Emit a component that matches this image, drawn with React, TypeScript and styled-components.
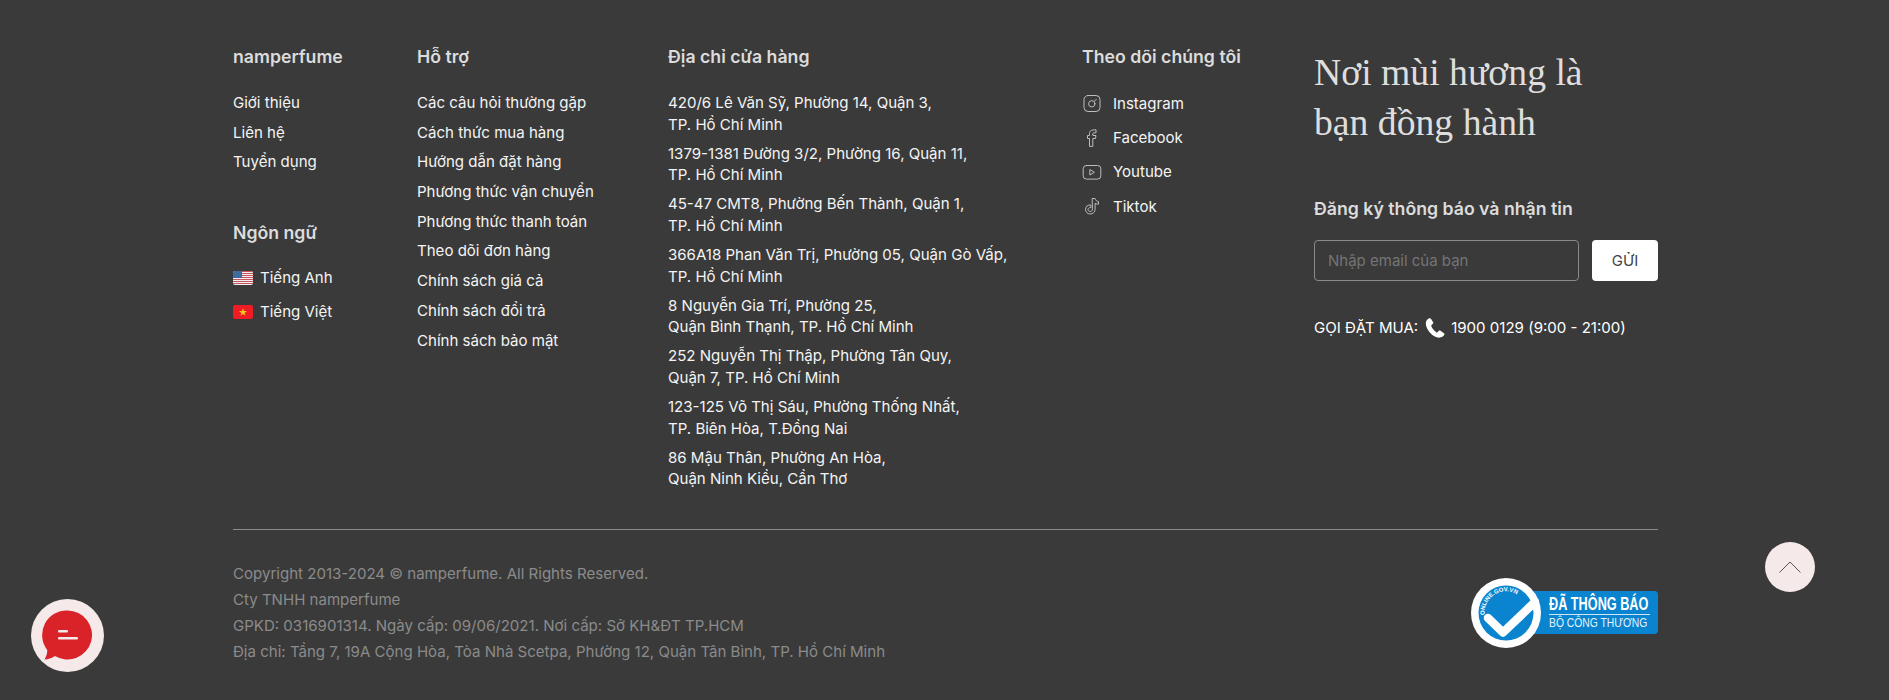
import React from "react";
import styled, { createGlobalStyle } from "styled-components";

const Global = createGlobalStyle`
  html, body { margin: 0; padding: 0; background: #3a3a3a; }
  * { box-sizing: border-box; }
  body { font-family: Inter, "Noto Sans", sans-serif; }
`;

const Footer = styled.footer`
  min-height: 700px;
  background: #3a3a3a;
  padding: 45px 231px 0 233px;
  color: #f4f4f4;
  font-size: 15.05px;
`;
const Columns = styled.div`
  display: grid;
  grid-template-columns: 184px 251px 414px 232px 344px;
  padding-bottom: 31px;
  border-bottom: 1px solid #8c8c8c;
`;
const Column = styled.div`
  display: flex;
  flex-direction: column;
`;
const Heading = styled.h3<{ $top?: number }>`
  margin: ${(p) => p.$top ?? 0}px 0 19px;
  font-size: 17.7px;
  line-height: 24px;
  font-weight: 600;
  color: #dcdcdc;
  white-space: nowrap;
`;
const LinkList = styled.ul`
  list-style: none;
  margin: 0;
  padding: 0;
`;
const LinkItem = styled.li`
  height: 29.7px;
  line-height: 29.7px;
  white-space: nowrap;
`;
const Address = styled.p`
  margin: 0 0 7.7px;
  line-height: 21.5px;
  white-space: nowrap;
  &:first-of-type { margin-top: 4px; }
`;
const Languages = styled.div`
  margin-top: -3px;
`;
const IconRow = styled.div<{ $h: number; $gap: number }>`
  display: flex;
  align-items: center;
  gap: ${(p) => p.$gap}px;
  height: ${(p) => p.$h}px;
  white-space: nowrap;
`;
const SocialIcons = styled.div`
  margin-top: -2px;
`;
const SocialIcon = styled.svg`
  width: 20px;
  height: 20px;
  flex: none;
  fill: none;
  stroke: #bdbdbd;
  stroke-width: 1;
  stroke-linecap: round;
  stroke-linejoin: round;
`;
const Flag = styled.svg`
  width: 20px;
  height: 14px;
  flex: none;
  border-radius: 2px;
`;
const Slogan = styled.div`
  font-family: "Liberation Serif", serif;
  font-size: 37.7px;
  line-height: 50px;
  color: #dedede;
  margin: 2px 0 50px;
`;
const Subscribe = styled.h3`
  margin: 0 0 19px;
  font-size: 17.7px;
  line-height: 24px;
  font-weight: 600;
  color: #dcdcdc;
  white-space: nowrap;
`;
const Form = styled.form`
  display: flex;
  gap: 13px;
`;
const EmailInput = styled.input`
  width: 265px;
  height: 41px;
  padding: 0 13px;
  background: transparent;
  border: 1px solid #8a8a8a;
  border-radius: 4px;
  font: 15px Inter, sans-serif;
  color: #fff;
  outline: none;
  &::placeholder { color: #757575; opacity: 1; }
`;
const SendButton = styled.button`
  width: 66px;
  height: 41px;
  background: #fff;
  border: 0;
  border-radius: 4px;
  font: 15px Inter, sans-serif;
  color: #444;
`;
const Hotline = styled.div`
  display: flex;
  align-items: center;
  gap: 5px;
  margin-top: 35px;
  height: 22px;
  white-space: nowrap;
  color: #fff;
`;
const PhoneIcon = styled.svg`
  width: 22px;
  height: 22px;
  fill: #fff;
  flex: none;
  margin: 2px 0 0 1px;
`;
const Bottom = styled.div`
  display: flex;
  justify-content: space-between;
  align-items: center;
  padding-top: 31px;
`;
const Legal = styled.div`
  color: #8b8b8b;
  line-height: 26px;
`;
const Badge = styled.div`
  position: relative;
  width: 187px;
  height: 70px;
  display: flex;
  align-items: center;
`;
const BadgePanel = styled.div`
  width: 100%;
  height: 43px;
  padding-left: 78px;
  background: #0a84cf;
  border-radius: 35px 6px 6px 35px;
  color: #fff;
  display: flex;
  flex-direction: column;
  justify-content: center;
  font-family: "Liberation Sans", sans-serif;
`;
const BadgeTop = styled.div`
  font-size: 17.5px;
  line-height: 20px;
  font-weight: 700;
  transform: scaleX(0.725);
  transform-origin: left center;
  white-space: nowrap;
`;
const BadgeRule = styled.div`
  height: 1px;
  width: 101px;
  background: #cfe6f5;
`;
const BadgeBottom = styled.div`
  font-size: 12px;
  line-height: 16px;
  white-space: nowrap;
  color: #e6f3fb;
  transform: scaleX(0.86);
  transform-origin: left center;
`;
const Seal = styled.svg`
  position: absolute;
  left: 0;
  top: 0;
  width: 70px;
  height: 70px;
`;
const ChatBubble = styled.button`
  position: fixed;
  left: 31px;
  bottom: 28px;
  width: 73px;
  height: 73px;
  padding: 0;
  border: 0;
  border-radius: 50%;
  background: #f5e9e9;
  display: flex;
  align-items: center;
  justify-content: center;
`;
const ChatIcon = styled.svg`
  width: 73px;
  height: 73px;
`;
const ScrollTop = styled.button`
  position: fixed;
  right: 74px;
  bottom: 108px;
  width: 50px;
  height: 50px;
  padding: 0;
  border: 0;
  border-radius: 50%;
  background: #f5e9e9;
  display: flex;
  align-items: center;
  justify-content: center;
`;
const Chevron = styled.svg`
  width: 22px;
  height: 12px;
  fill: none;
  stroke: #555;
  stroke-width: 1;
`;

const about = ["Giới thiệu", "Liên hệ", "Tuyển dụng"];
const support = [
  "Các câu hỏi thường gặp",
  "Cách thức mua hàng",
  "Hướng dẫn đặt hàng",
  "Phương thức vận chuyển",
  "Phương thức thanh toán",
  "Theo dõi đơn hàng",
  "Chính sách giá cả",
  "Chính sách đổi trả",
  "Chính sách bảo mật",
];
const addresses = [
  ["420/6 Lê Văn Sỹ, Phường 14, Quận 3,", "TP. Hồ Chí Minh"],
  ["1379-1381 Đường 3/2, Phường 16, Quận 11,", "TP. Hồ Chí Minh"],
  ["45-47 CMT8, Phường Bến Thành, Quận 1,", "TP. Hồ Chí Minh"],
  ["366A18 Phan Văn Trị, Phường 05, Quận Gò Vấp,", "TP. Hồ Chí Minh"],
  ["8 Nguyễn Gia Trí, Phường 25,", "Quận Bình Thạnh, TP. Hồ Chí Minh"],
  ["252 Nguyễn Thị Thập, Phường Tân Quy,", "Quận 7, TP. Hồ Chí Minh"],
  ["123-125 Võ Thị Sáu, Phường Thống Nhất,", "TP. Biên Hòa, T.Đồng Nai"],
  ["86 Mậu Thân, Phường An Hòa,", "Quận Ninh Kiều, Cần Thơ"],
];

const UsFlag = () => (
  <Flag viewBox="0 0 20 14">
    <rect width="20" height="14" fill="#eee" />
    {[0, 2, 4, 6, 8, 10, 12].map((y) => (
      <rect key={y} y={y} width="20" height="1" fill="#c9525c" />
    ))}
    <rect width="9" height="7" fill="#3d6d9e" />
  </Flag>
);
const VnFlag = () => (
  <Flag viewBox="0 0 20 14">
    <rect width="20" height="14" fill="#ee1c25" />
    <polygon
      points="10,3.2 11,6.1 14,6.1 11.6,7.9 12.5,10.8 10,9 7.5,10.8 8.4,7.9 6,6.1 9,6.1"
      fill="#ffc61a"
    />
  </Flag>
);

const socials = [
  {
    name: "Instagram",
    icon: (
      <>
        <rect x="2" y="2.5" width="16" height="16" rx="4" />
        <circle cx="9.8" cy="10.8" r="3.2" />
        <path d="M12.6 8l1.7-1.7" />
      </>
    ),
  },
  {
    name: "Facebook",
    icon: <path d="M7.5 19V11.5H5.5V8.5H7.5V6.5C7.5 4 9 2.8 14 2.8V5.8C11 5.8 10.8 6 10.8 7V8.5H14L13.5 11.5H10.8V19Z" />,
  },
  {
    name: "Youtube",
    icon: (
      <>
        <rect x="1.2" y="3.5" width="17.6" height="13.6" rx="3.2" />
        <path d="M8.2 7.8l4.2 2.5-4.2 2.5z" />
      </>
    ),
  },
  {
    name: "Tiktok",
    icon: (
      <path d="M10.5 2.5h2.6c.2 1.6 1.500 2.900 3.400 3.100v2.600c-1.300 0-2.500-.4-3.400-1v6.100c0 2.900-2.300 4.700-4.900 4.700-2.600 0-4.700-2-4.700-4.600 0-2.800 2.300-4.800 5.400-4.400v2.700c-1.500-.4-2.900.5-2.900 1.800 0 1.100 1 2 2.100 2 1.300 0 2.400-.9 2.400-2.300z" />
    ),
  },
];

export default function App() {
  return (
    <>
      <Global />
      <Footer>
        <Columns>
          <Column>
            <Heading>namperfume</Heading>
            <LinkList>
              {about.map((t) => (
                <LinkItem key={t}>{t}</LinkItem>
              ))}
            </LinkList>
            <Heading $top={44}>Ngôn ngữ</Heading>
            <Languages>
              <IconRow $h={33.7} $gap={7}>
                <UsFlag />
                Tiếng Anh
              </IconRow>
              <IconRow $h={33.7} $gap={7}>
                <VnFlag />
                Tiếng Việt
              </IconRow>
            </Languages>
          </Column>
          <Column>
            <Heading>Hỗ trợ</Heading>
            <LinkList>
              {support.map((t) => (
                <LinkItem key={t}>{t}</LinkItem>
              ))}
            </LinkList>
          </Column>
          <Column>
            <Heading>Địa chỉ cửa hàng</Heading>
            {addresses.map(([a, b]) => (
              <Address key={a}>
                {a}
                <br />
                {b}
              </Address>
            ))}
          </Column>
          <Column>
            <Heading>Theo dõi chúng tôi</Heading>
            <SocialIcons>
              {socials.map((s) => (
                <IconRow key={s.name} $h={34.3} $gap={11}>
                  <SocialIcon viewBox="0 0 20 20">{s.icon}</SocialIcon>
                  {s.name}
                </IconRow>
              ))}
            </SocialIcons>
          </Column>
          <Column>
            <Slogan>
              Nơi mùi hương là
              <br />
              bạn đồng hành
            </Slogan>
            <Subscribe>Đăng ký thông báo và nhận tin</Subscribe>
            <Form>
              <EmailInput placeholder="Nhập email của bạn" />
              <SendButton type="button">GỬI</SendButton>
            </Form>
            <Hotline>
              GỌI ĐẶT MUA:
              <PhoneIcon viewBox="0 0 24 24">
                <path d="M5.2 1.5C3.5 2.3 2 4 2 7C2 13.5 9.5 22.5 16.5 22.5C19 22.5 21.5 21 22.3 19.2C22.6 18.5 22.3 18 21.8 17.6L18 14.9C17.3 14.5 16.7 14.6 16.2 15.1L14.7 16.7C14.3 17 13.8 17 13.4 16.7C11.2 15 9 12.5 8 10C7.8 9.5 7.9 9 8.2 8.7L9.7 7.3C10.2 6.8 10.3 6.2 10 5.6L7.6 2C7 1.3 6 1.1 5.2 1.5Z" />
              </PhoneIcon>
              1900 0129 (9:00 - 21:00)
            </Hotline>
          </Column>
        </Columns>
        <Bottom>
          <Legal>
            Copyright 2013-2024 © namperfume. All Rights Reserved.
            <br />
            Cty TNHH namperfume
            <br />
            GPKD: 0316901314. Ngày cấp: 09/06/2021. Nơi cấp: Sở KH&amp;ĐT TP.HCM
            <br />
            Địa chỉ: Tầng 7, 19A Cộng Hòa, Tòa Nhà Scetpa, Phường 12, Quận Tân Bình, TP. Hồ Chí Minh
          </Legal>
          <Badge>
            <BadgePanel>
              <BadgeTop>ĐÃ THÔNG BÁO</BadgeTop>
              <BadgeRule />
              <BadgeBottom>BỘ CÔNG THƯƠNG</BadgeBottom>
            </BadgePanel>
            <Seal viewBox="0 0 70 70">
              <circle cx="35" cy="35" r="35" fill="#fff" />
              <circle cx="35" cy="35" r="27.5" fill="#0a84cf" />
              <defs>
                <path id="sealArc" d="M13.5 37A21.5 21.5 0 0 1 52.5 22.5" />
              </defs>
              <text fontFamily="Liberation Sans, sans-serif" fontSize="6" fontWeight="700" fill="#fff">
                <textPath href="#sealArc">ONLINE.GOV.VN</textPath>
              </text>
              <path d="M17 40L32 54.5L64 24" fill="none" stroke="#fff" strokeWidth="8.5" strokeLinejoin="round" strokeLinecap="round" />
            </Seal>
          </Badge>
        </Bottom>
      </Footer>
      <ScrollTop aria-label="Lên đầu trang">
        <Chevron viewBox="0 0 22 12">
          <path d="M.5 11.5 11 1l10.5 10.5" />
        </Chevron>
      </ScrollTop>
      <ChatBubble aria-label="Chat">
        <ChatIcon viewBox="0 0 73 73">
          <path
            d="M36.5 11.5a24.5 24.5 0 1 1-12.6 45.5C21 59 17 60.5 13.5 60.5c1.7-3 3-5.6 2.7-9.6A24.5 24.5 0 0 1 36.5 11.5z"
            fill="#da2229"
          />
          <rect x="27" y="31" width="10" height="2.4" rx="1" fill="#f5e9e9" />
          <rect x="27" y="38" width="20" height="2.4" rx="1" fill="#f5e9e9" />
        </ChatIcon>
      </ChatBubble>
    </>
  );
}
